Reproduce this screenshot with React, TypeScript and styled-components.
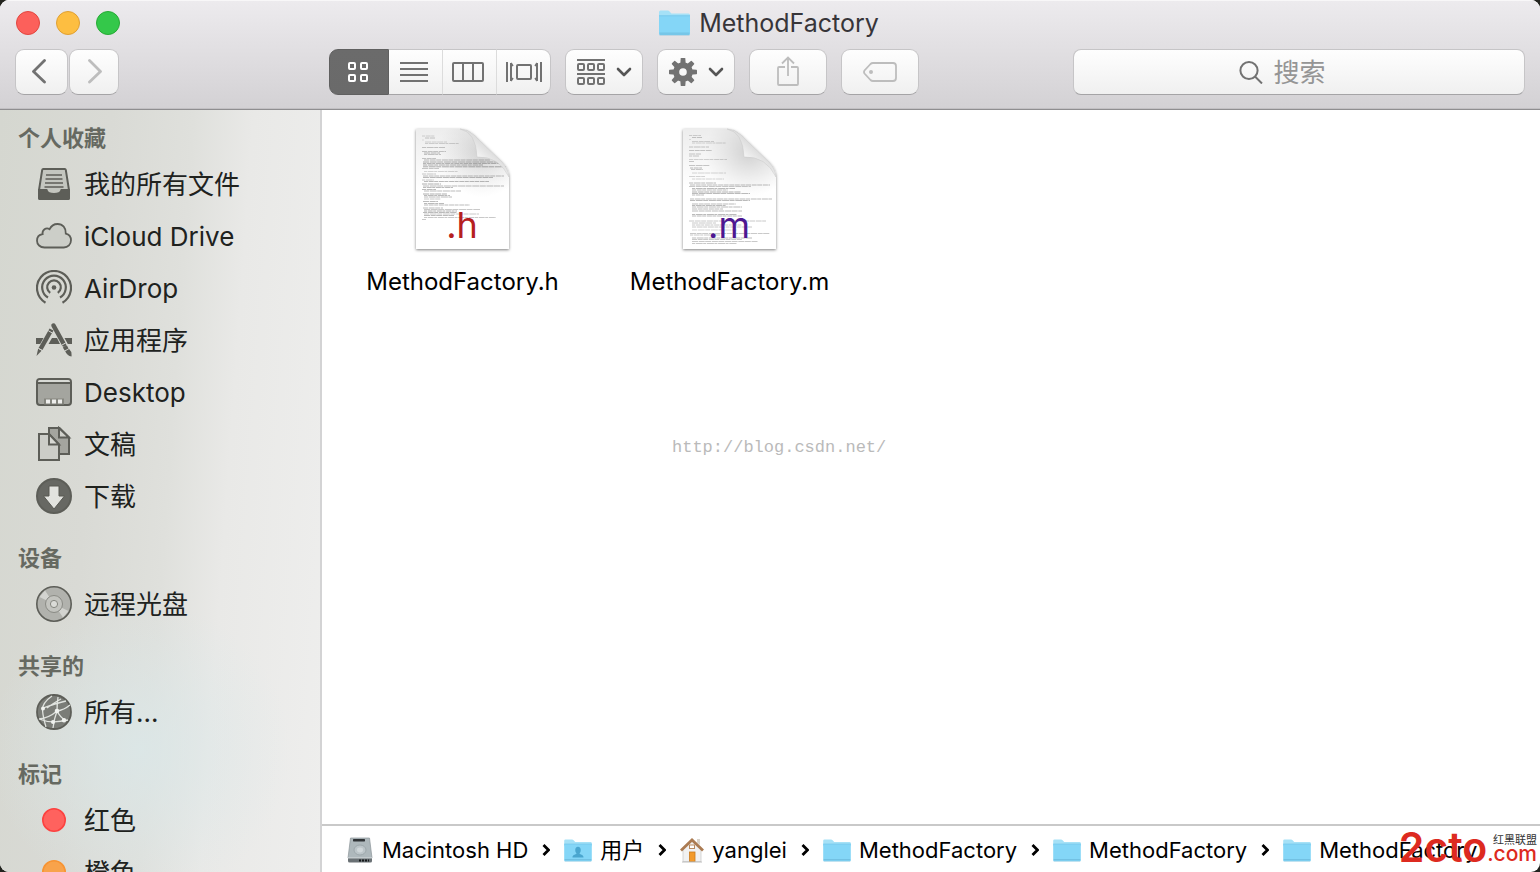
import React from "react";
import styled, { createGlobalStyle } from "styled-components";

const GlobalStyle = createGlobalStyle`
  * { box-sizing: border-box; }
  body { margin: 0; background: #23241f; overflow: hidden; }
  button, input { font: inherit; color: inherit; margin: 0; }
  a { color: inherit; text-decoration: none; }
  ul, ol { list-style: none; margin: 0; padding: 0; }
  svg { display: block; flex: none; }
`;

const Window = styled.div`
  position: relative;
  display: flex;
  flex-direction: column;
  height: 100vh;
  overflow: hidden;
  border-radius: 9px;
  background: #fff;
  font-family: Inter, "Noto Sans CJK SC", sans-serif;
`;

/* ---------- title bar and toolbar ---------- */

const Header = styled.header`
  flex: none;
  padding: 0 15px 14px;
  background: linear-gradient(#edebee, #d3d1d4);
  border-bottom: 1px solid #8f8e90;
  box-shadow: inset 0 1px 0 #f8f7f8, inset 0 -1px 0 #c2c0c3;
`;

const TitleRow = styled.div`
  display: grid;
  grid-template-columns: 1fr auto 1fr;
  align-items: center;
  height: 45px;
  margin-bottom: 4px;
`;

const Lights = styled.div`
  display: flex;
  gap: 16px;
  padding-left: 1px;
`;

const Light = styled.button<{ $fill: string; $edge: string }>`
  width: 24px;
  height: 24px;
  padding: 0;
  border: 1px solid ${(p) => p.$edge};
  border-radius: 50%;
  background: ${(p) => p.$fill};
`;

const Title = styled.h1`
  display: flex;
  align-items: center;
  gap: 9px;
  margin: 0;
  padding-right: 2px;
  font-size: 25px;
  line-height: 32px;
  font-weight: 400;
  color: #373539;
`;

const Tools = styled.div`
  display: flex;
  align-items: center;
  gap: 14px;
`;

const NavGroup = styled.div`
  display: flex;
  gap: 1px;
  width: 300px;
`;

const ToolButton = styled.button<{ $width?: number }>`
  display: flex;
  align-items: center;
  justify-content: center;
  gap: 11px;
  width: ${(p) => p.$width ?? 78}px;
  height: 46px;
  padding: 0;
  border: 1px solid #c6c5c7;
  border-bottom-color: #a5a4a6;
  border-radius: 9px;
  background: linear-gradient(#fefefe, #f0f0f0);
  color: #727272;
  &:disabled { color: #bdbdbd; }
`;

const BackButton = styled(ToolButton)`
  padding-right: 5px;
`;

const Segments = styled.div`
  display: flex;
`;

const Segment = styled(ToolButton)`
  padding-right: 3px;
  border-radius: 0;
  border-left-width: 0;
  border-right-color: #dcdcdc;
  &:first-child { border-radius: 9px 0 0 9px; border-left-width: 1px; }
  &:last-child { border-radius: 0 9px 9px 0; border-right-color: #c6c5c7; padding-right: 0; }
  &[aria-pressed="true"] {
    background: linear-gradient(#6b6b6b, #6a6a6a);
    border-color: #606060;
    color: #fff;
  }
`;

const SearchField = styled.label`
  display: flex;
  align-items: center;
  justify-content: center;
  gap: 11px;
  flex: 0 1 452px;
  height: 46px;
  margin-left: auto;
  border: 1px solid #c6c5c7;
  border-bottom-color: #a5a4a6;
  border-radius: 8px;
  background: linear-gradient(#fefefe, #f0f0f0);
  color: #727272;
  input {
    width: 86px;
    padding: 2px 0 0;
    border: 0;
    outline: 0;
    background: none;
    font-size: 26px;
    line-height: 38px;
  }
  input::placeholder { color: #959595; opacity: 1; }
`;

/* ---------- body ---------- */

const Body = styled.div`
  display: flex;
  flex: 1;
  min-height: 0;
`;

const Sidebar = styled.nav`
  flex: 0 0 322px;
  overflow: hidden;
  padding-top: 8px;
  border-right: 2px solid #d3d3d4;
  background:
    radial-gradient(circle at 140px 640px, rgba(219, 232, 233, 0.8), rgba(219, 232, 233, 0) 150px),
    linear-gradient(94deg, #d5d7d0 0%, #d9dad5 30%, #dfe0dc 52%, #e9e9e7 68%, #eeeeed 100%);
`;

const Section = styled.section`
  margin-bottom: 16px;
`;

const SectionTitle = styled.h2`
  margin: 0;
  padding-left: 18px;
  font-size: 22px;
  line-height: 40px;
  font-weight: 600;
  color: #666961;
`;

const Place = styled.a`
  display: flex;
  align-items: center;
  gap: 12px;
  height: 52px;
  padding-left: 36px;
  font-size: 26px;
  line-height: 38px;
  color: #20221e;
  svg { color: #5d5e58; }
  span { padding-top: 2px; }
`;

const Content = styled.main`
  display: flex;
  flex-direction: column;
  flex: 1;
  min-width: 0;
`;

const Files = styled.ul`
  display: flex;
  flex-wrap: wrap;
  align-content: flex-start;
  flex: 1;
  padding: 14px 7px;
`;

const FileItem = styled.li`
  width: 267px;
`;

const FileLink = styled.a`
  display: flex;
  flex-direction: column;
  align-items: center;
  gap: 10px;
  font-size: 24px;
  line-height: 32px;
  color: #000;
`;

const PathBar = styled.ol`
  display: flex;
  align-items: center;
  flex: none;
  gap: 14px;
  height: 48px;
  padding: 2px 0 0 24px;
  overflow: hidden;
  border-top: 2px solid #c9c9c9;
  font-size: 22px;
  line-height: 30px;
  white-space: nowrap;
  color: #000;
`;

const Crumb = styled.li`
  display: flex;
  align-items: center;
  gap: 14px;
  a { display: flex; align-items: center; gap: 8px; }
`;

const BlogMark = styled.p`
  position: absolute;
  top: 437px;
  left: 672px;
  margin: 0;
  font: 17px/22px "Liberation Mono", monospace;
  color: #bababa;
`;

const SiteMark = styled.div`
  position: absolute;
  right: 3px;
  bottom: 4px;
  display: flex;
  align-items: flex-end;
  color: #dd2a20;
`;

const SiteName = styled.span`
  font-size: 41px;
  line-height: 42px;
  font-weight: 600;
`;

const SiteSide = styled.span`
  display: flex;
  flex-direction: column;
  align-items: flex-end;
  padding-bottom: 6px;
  font-size: 21px;
  line-height: 16px;
  font-weight: 500;
  small {
    font-size: 11px;
    line-height: 12px;
    font-weight: 400;
    color: #333;
  }
`;

/* ---------- drawings ---------- */

const Chevron = ({ dir }: { dir: "left" | "right" }) => (
  <svg width="16" height="26" viewBox="0 0 16 26" fill="none" stroke="currentColor" strokeWidth="2.8" strokeLinecap="round" strokeLinejoin="round">
    <path d={dir === "left" ? "M13.500 1.500 2.500 12.500l11 10.500" : "M3.500 1.500l11 11-11 10.500"} />
  </svg>
);

const DownChevron = () => (
  <svg width="16" height="10" viewBox="0 0 16 10" fill="none" stroke="#555" strokeWidth="2.6" strokeLinecap="round" strokeLinejoin="round">
    <path d="M2 2l6 6 6-6" />
  </svg>
);

const CrumbArrow = () => (
  <svg width="8" height="12" viewBox="0 0 8 12" fill="none" stroke="#000" strokeWidth="2.800">
    <path d="M1.500 1l5 5-5 5" />
  </svg>
);

const GridIcon = () => (
  <svg width="22" height="22" viewBox="0 0 22 22" fill="none" stroke="currentColor" strokeWidth="2">
    {[[2, 2], [14, 2], [2, 14], [14, 14]].map(([x, y]) => (
      <rect key={`${x}-${y}`} x={x} y={y} width="6" height="6" rx="1" />
    ))}
  </svg>
);

const ListIcon = () => (
  <svg width="28" height="20" viewBox="0 0 28 20" fill="currentColor">
    {[0, 6, 12, 18].map((y) => <rect key={y} y={y} width="28" height="2" />)}
  </svg>
);

const ColumnsIcon = () => (
  <svg width="32" height="20" viewBox="0 0 32 20" fill="none" stroke="currentColor" strokeWidth="2">
    <rect x="1" y="1" width="30" height="18" rx="1" />
    <path d="M11 1v18M21 1v18" />
  </svg>
);

const CoverFlowIcon = () => (
  <svg width="36" height="20" viewBox="0 0 36 20" fill="none" stroke="currentColor" strokeWidth="2">
    <path d="M1 0v20M35 0v20" />
    <path d="M5 1v18M31 1v18" />
    <path d="M5 1l2 3M5 19l2-3M31 1l-2 3M31 19l-2-3" strokeWidth="1.5" />
    <rect x="11" y="3" width="14" height="14" rx="1" />
  </svg>
);

const ArrangeIcon = () => (
  <svg width="28" height="26" viewBox="0 0 28 26" fill="none" stroke="currentColor" strokeWidth="2">
    <path d="M0 1h28M0 15h28" />
    {[1, 11, 21].map((x) => (
      <React.Fragment key={x}>
        <rect x={x} y="5" width="6" height="6" rx="1" />
        <rect x={x} y="19" width="6" height="6" rx="1" />
      </React.Fragment>
    ))}
  </svg>
);

const GearIcon = () => (
  <svg width="28" height="28" viewBox="0 0 28 28">
    <g fill="currentColor">
      {[0, 45, 90, 135, 180, 225, 270, 315].map((a) => (
        <path key={a} d="M11.200 7 11.700.600Q11.800 0 12.400 0h3.200q.6 0 .7.600L16.800 7z" transform={`rotate(${a} 14 14)`} />
      ))}
    </g>
    <circle cx="14" cy="14" r="6.800" fill="none" stroke="currentColor" strokeWidth="6" />
  </svg>
);

const ShareIcon = () => (
  <svg width="22" height="32" viewBox="0 0 22 32" fill="none" stroke="currentColor" strokeWidth="1.800">
    <path d="M8 11H2q-1 0-1 1v16q0 1 1 1h18q1 0 1-1V12q0-1-1-1h-6M11 20V2M5 7.500 11 1.500l6 6" />
  </svg>
);

const TagIcon = () => (
  <svg width="34" height="20" viewBox="0 0 34 20" fill="none" stroke="currentColor" strokeWidth="1.800">
    <path d="M10 1h20q3 0 3 3v12q0 3-3 3H10q-1.500 0-2.500-1L1.500 11.500q-1-1.500 0-3L7.500 2q1-1 2.500-1z" />
    <circle cx="8" cy="10" r="2" fill="currentColor" stroke="none" />
  </svg>
);

const SearchIcon = () => (
  <svg width="24" height="24" viewBox="0 0 24 24" fill="none" stroke="currentColor" strokeWidth="2">
    <circle cx="10" cy="10.500" r="8.600" />
    <path d="M16 16.500l7 7" />
  </svg>
);

const FolderIcon = ({ width, person }: { width: number; person?: boolean }) => (
  <svg width={width} height={Math.round((width * 5) / 6)} viewBox="0 0 30 25">
    <path d="M0 2Q0 .5 1.500.5h7q1 0 1.700.8L12 3.200h16.500q1.500 0 1.500 1.500V8H0z" fill="#a5e1f7" />
    <path d="M0 5.500h30V23q0 1-1 1H1q-1 0-1-1z" fill="#84d6f7" />
    <path d="M0 5.500h30" stroke="#72c6ea" strokeWidth=".8" />
    <path d="M.5 22.300h29M.5 24h29" stroke="#6cb9dc" strokeWidth=".8" />
    {person && (
      <path d="M15 8.500c2 0 3 1.500 3 3.500s-.7 3-1.400 3.600c.2 1.600 4.400 1.200 4.400 4.400H9c0-3.200 4.200-2.800 4.400-4.400C12.700 15 12 14 12 12s1-3.500 3-3.500z" fill="#4aa6cf" />
    )}
  </svg>
);

const DriveIcon = () => (
  <svg width="28" height="28" viewBox="0 0 28 28">
    <path d="M4.500 2h19L26 22H2z" fill="#aeb8bc" stroke="#8b9498" strokeWidth=".7" />
    <path d="M2 22h24v3q0 1.500-1.500 1.500h-21Q2 26.500 2 25z" fill="#6a7175" />
    <path d="M2 21h24v1.500H2z" fill="#c3cacd" />
    <rect x="7" y="3" width="12" height="2.400" rx=".6" fill="#2f3336" />
    <ellipse cx="14" cy="14" rx="6" ry="5" fill="#bcc5c9" stroke="#98a2a6" strokeWidth=".8" />
    <ellipse cx="14" cy="14" rx="3" ry="2.400" fill="#d0d7da" />
    <path d="M13 24.500h10" stroke="#15181a" strokeWidth="1.800" strokeDasharray="2 1" />
  </svg>
);

const HouseIcon = () => (
  <svg width="24" height="26" viewBox="0 0 24 26">
    <path d="M3 11 12 3l9 8v13.500H3z" fill="#f1f1f1" stroke="#c6c6c6" strokeWidth=".7" />
    <path d="M17 2h3v6l-3-2.500z" fill="#d9d3ca" />
    <path d="M1 13.500 12 3l11 10.500" fill="none" stroke="#ab7b52" strokeWidth="2.800" />
    <rect x="9.500" y="8" width="5" height="3.500" fill="#fff" stroke="#b98a60" />
    <rect x="9.500" y="15" width="5.500" height="9.500" fill="#f39a2b" stroke="#c97a1e" strokeWidth=".8" />
    <path d="M2 25h20" stroke="#bdbdbd" />
  </svg>
);

const PlaceSvg = ({ children }: { children: React.ReactNode }) => (
  <svg width="36" height="36" viewBox="0 0 36 36" fill="none" stroke="currentColor" strokeWidth="2">
    {children}
  </svg>
);

const TrayIcon = () => (
  <PlaceSvg>
    <path d="M7.200 3h21.600q.8 0 1 .9L33 24v8q0 1-1 1H4q-1 0-1-1v-8L6.200 3.900q.2-.9 1-.9z" fill="#c4c6bf" />
    <path d="M3 24h7.500q1 4 7.500 4t7.500-4H33v8q0 1-1 1H4q-1 0-1-1z" fill="currentColor" />
    <path d="M10 9h16M9.500 13h17M9 17h18M8.500 21h19" strokeWidth="1.600" />
  </PlaceSvg>
);

const CloudIcon = () => (
  <PlaceSvg>
    <path d="M8.500 29.500C4 29.500 1 26.500 1 22.700c0-3.500 2.400-6 5.600-6.500-.7-4.200 3.400-7.200 7-5 1.500-3.300 4.600-5.200 8-5.200 5 0 8.600 4 8.200 9.600 3 .7 5.200 3.300 5.200 6.700 0 4-3 7.200-7.200 7.200z" fill="#cccec8" strokeWidth="1.800" />
  </PlaceSvg>
);

const AirDropIcon = () => (
  <PlaceSvg>
    <path d="M9.500 32.700a17 17 0 1 1 17 0" strokeWidth="2.200" />
    <path d="M12 27.500a11.800 11.800 0 1 1 12 0" strokeWidth="2.200" />
    <path d="M14.200 22.800a6.800 6.800 0 1 1 7.600 0" strokeWidth="2.200" />
    <circle cx="18" cy="17.500" r="2.300" fill="currentColor" stroke="none" />
  </PlaceSvg>
);

const AppsIcon = () => (
  <PlaceSvg>
    <path d="M0 16h7.500l-3.300 6H0zM16 16h5l3 6H12.500zM28.500 16H36v6h-4.200z" fill="currentColor" stroke="none" />
    <path d="M15.500 7.500 4.500 27" strokeWidth="4.500" />
    <path d="M2.200 26.500l3.600 2.100L.5 34z" fill="currentColor" stroke="none" />
    <path d="M17.500 3.500 28 22.500" strokeWidth="4.500" strokeLinecap="round" />
    <path d="M28.800 24.300l1.800 3.200" strokeWidth="4.500" />
    <path d="M29.200 29.200l3.900-2.200q3 2.500 2.400 7.500-4.500-.8-6.300-5.300z" fill="currentColor" stroke="none" />
    <path d="M12.300 8.700l4.200 2.400M26 23l5-2.800M2.500 26.500l5 2.800" stroke="#d8d9d4" strokeWidth="1" />
  </PlaceSvg>
);

const DesktopIcon = () => (
  <PlaceSvg>
    <rect x="1" y="5" width="34" height="26" rx="3" fill="#a4a59f" />
    <path d="M2 8.500V8q0-2 2-2h28q2 0 2 2v.5z" fill="#d8dad5" stroke="none" />
    <path d="M1 9h34" />
    <rect x="8" y="24.500" width="20" height="6" fill="#85867f" stroke="none" />
    <path d="M10 27.500h4M16 27.500h4M22 27.500h4" stroke="#eeeeec" strokeWidth="4" />
  </PlaceSvg>
);

const DocumentsIcon = () => (
  <PlaceSvg>
    <path d="M13 2h10.500L33 11.500V28H13z" fill="#a4a59f" />
    <path d="M23 2v9.500h10z" fill="#d0d1cb" />
    <path d="M3 8h10l10 10.500V34H3z" fill="#cccdc8" />
    <path d="M13 8v10.500h10z" fill="#d8d9d4" />
  </PlaceSvg>
);

const DownloadIcon = () => (
  <PlaceSvg>
    <circle cx="18" cy="18" r="17" fill="#676863" />
    <path d="M13 8h10v10h5.500L18 31 7.500 18H13z" fill="#e2e3df" stroke="#585953" strokeWidth="1" />
  </PlaceSvg>
);

const DiscIcon = () => (
  <PlaceSvg>
    <circle cx="18" cy="18" r="17.200" fill="#b1b2ad" strokeWidth="1.600" />
    <path d="M18 18 3.500 11 9 4.500zM18 18l14.500 7L27 31.500z" fill="#d3d4d0" stroke="none" />
    <circle cx="18" cy="18" r="8.500" fill="#c3c4bf" stroke="#8a8b85" strokeWidth="1" />
    <circle cx="18" cy="18" r="3.600" fill="#dadbd7" stroke="#85867f" strokeWidth="1" />
  </PlaceSvg>
);

const NetworkIcon = () => (
  <PlaceSvg>
    <circle cx="18" cy="18" r="17" fill="#7a7c77" strokeWidth="1.800" />
    <g stroke="#e0e3df" strokeWidth="1.300">
      <path d="M16 2Q6 9 6.500 16T10 33M22 3q-1 8-1 14 3 6 8 9M30 7q-9 2-23 7M21 17q7-1 13-6M21 17Q13 24 3 25M17 34q1-9 4-17M3 25q12 5 29 1M25 5q-9 5-14 9" />
    </g>
    <g fill="#f0f2ef" stroke="none">
      <circle cx="7" cy="14.500" r="2" />
      <circle cx="21" cy="17" r="2.300" />
      <circle cx="17" cy="28" r="2" />
      <circle cx="28" cy="26.300" r="2.200" />
    </g>
  </PlaceSvg>
);

const TagDot = ({ fill, edge }: { fill: string; edge: string }) => (
  <PlaceSvg>
    <circle cx="18" cy="18" r="11.200" fill={fill} stroke={edge} strokeWidth="1.600" />
  </PlaceSvg>
);

type Line = [x: number, y: number, width: number, strength: number];

const headerLines: Line[] = [
  [6, 7, 13, 3], [9, 9, 10, 4], [6, 11, 2, 2], [9, 13, 22, 3], [9, 14.5, 34, 3],
  [6, 18.5, 23, 4], [6, 22.5, 24, 4], [8, 24, 16, 5], [8, 25.5, 17, 4],
  [6, 29.5, 14, 4], [8, 31, 66, 5], [7, 33, 77, 6], [7, 34.5, 80, 5], [7, 36, 60, 6], [7, 37.8, 83, 6], [6, 39.5, 17, 4],
  [8, 42.5, 34, 3], [6, 45, 14, 4], [7, 47, 81, 5], [7, 48.5, 70, 5], [6, 51, 12, 4], [8, 52.5, 65, 5],
  [6, 55, 19, 6], [7, 57, 81, 5], [7, 58.5, 30, 5], [6, 60.5, 14, 5], [8, 62, 37, 5],
  [7, 65, 24, 6], [8, 66.5, 26, 5], [8, 68, 28, 5], [8, 70, 17, 4], [7, 72.5, 15, 5], [8, 74.5, 20, 5], [8, 76, 46, 5],
  [7, 79, 20, 5], [8, 80.5, 56, 4], [8, 82, 33, 6], [7, 83.5, 34, 5], [8, 85, 55, 4], [8, 86.5, 30, 5], [8, 88.5, 72, 4], [6, 90.5, 4, 4],
];

const sourceLines: Line[] = [
  [6, 6.5, 12, 3], [9, 8.5, 10, 4], [6, 10.5, 2, 2], [9, 12.5, 22, 3], [9, 14, 34, 3],
  [6, 18, 20, 4], [6, 21.5, 23, 4], [6, 25, 12, 4], [6, 27, 10, 4], [6, 30.5, 38, 3], [6, 32.5, 5, 4],
  [6, 36.5, 21, 4], [7, 39, 12, 5], [8, 40.5, 12, 4], [9, 44, 34, 3], [6, 47.5, 16, 3], [9, 50, 32, 3],
  [6, 54, 27, 5], [7, 56, 80, 5], [6, 57.5, 62, 4], [9, 59.5, 43, 5], [9, 61, 36, 5], [9, 63, 49, 6], [9, 64.5, 58, 5], [9, 66, 12, 5],
  [7, 70, 82, 5], [7, 71.5, 60, 5], [9, 75, 44, 5], [9, 76.5, 34, 5], [9, 78, 50, 5], [9, 80, 31, 5], [9, 82, 50, 5],
  [9, 85.5, 45, 5], [9, 87, 50, 5], [6, 92, 77, 4], [9, 94, 24, 4], [9, 96, 50, 4], [9, 98, 60, 4],
  [9, 101, 45, 3], [7, 104.5, 80, 4], [7, 106, 30, 4], [9, 109, 60, 5], [9, 110.5, 50, 4], [9, 112.5, 66, 4], [9, 114.5, 45, 4],
];

const CodeDocument = ({ lines, suffix, color, id }: { lines: Line[]; suffix: string; color: string; id: string }) => (
  <svg width="105" height="132" viewBox="-6 -5 105 132">
    <defs>
      <linearGradient id={`${id}-page`} x1="0" y1="0" x2="0" y2="1">
        <stop offset="0" stopColor="#ededed" />
        <stop offset=".5" stopColor="#fff" />
      </linearGradient>
      <linearGradient id={`${id}-curl`} x1=".1" y1=".9" x2=".55" y2=".4">
        <stop offset="0" stopColor="#fff" />
        <stop offset=".5" stopColor="#fbfbfb" />
        <stop offset="1" stopColor="#dedede" />
      </linearGradient>
      <radialGradient id={`${id}-shade`} gradientUnits="userSpaceOnUse" cx="66" cy="24" r="44">
        <stop offset="0" stopColor="#888" stopOpacity=".55" />
        <stop offset="1" stopColor="#aaa" stopOpacity="0" />
      </radialGradient>
      <filter id={`${id}-shadow`} x="-10%" y="-10%" width="120%" height="120%">
        <feDropShadow dx="0" dy="1" stdDeviation="1.5" floodColor="#000" floodOpacity=".5" />
      </filter>
    </defs>
    <path d="M0 0h44q8 0 14 6l28 27q7 7 7 15v72H0z" fill={`url(#${id}-page)`} filter={`url(#${id}-shadow)`} />
    <path d="M0 0h44q8 0 14 6l28 27q7 7 7 15v40H0z" fill={`url(#${id}-shade)`} opacity=".6" />
    <g stroke="#555">
      {lines.map(([x, y, w, s], i) => (
        <path key={i} d={`M${x} ${y}h${w}`} strokeWidth=".8" opacity={s / 10} strokeDasharray={`${3 + (i % 4)} .7 ${5 + (i % 3)} .5`} />
      ))}
    </g>
    <path d="M44 0q16 3 17 28 22-1 32 20-1-9-7-15L58 6Q52 0 44 0z" fill={`url(#${id}-curl)`} stroke="#cdcdcd" strokeWidth=".6" />
    <text x="46" y="109" textAnchor="middle" fontFamily="Inter, sans-serif" fontSize="36" fill={color}>{suffix}</text>
  </svg>
);

/* ---------- data ---------- */

const sections = [
  {
    title: "个人收藏",
    places: [
      { name: "我的所有文件", icon: <TrayIcon /> },
      { name: "iCloud Drive", icon: <CloudIcon /> },
      { name: "AirDrop", icon: <AirDropIcon /> },
      { name: "应用程序", icon: <AppsIcon /> },
      { name: "Desktop", icon: <DesktopIcon /> },
      { name: "文稿", icon: <DocumentsIcon /> },
      { name: "下载", icon: <DownloadIcon /> },
    ],
  },
  { title: "设备", places: [{ name: "远程光盘", icon: <DiscIcon /> }] },
  { title: "共享的", places: [{ name: "所有...", icon: <NetworkIcon /> }] },
  {
    title: "标记",
    places: [
      { name: "红色", icon: <TagDot fill="#ff625e" edge="#fc4240" /> },
      { name: "橙色", icon: <TagDot fill="#f8a34b" edge="#f79433" /> },
    ],
  },
];

const crumbs = [
  { name: "Macintosh HD", icon: <DriveIcon /> },
  { name: "用户", icon: <FolderIcon width={28} person /> },
  { name: "yanglei", icon: <HouseIcon /> },
  { name: "MethodFactory", icon: <FolderIcon width={28} /> },
  { name: "MethodFactory", icon: <FolderIcon width={28} /> },
  { name: "MethodFactory", icon: <FolderIcon width={28} /> },
];

export default function App() {
  return (
    <>
      <GlobalStyle />
      <Window>
        <Header>
          <TitleRow>
            <Lights>
              <Light aria-label="关闭" $fill="#fc605b" $edge="#e2463f" />
              <Light aria-label="最小化" $fill="#fdbe41" $edge="#e0a033" />
              <Light aria-label="缩放" $fill="#34c84a" $edge="#27aa35" />
            </Lights>
            <Title>
              <FolderIcon width={31} />
              MethodFactory
            </Title>
          </TitleRow>
          <Tools>
            <NavGroup>
              <BackButton $width={53} aria-label="后退"><Chevron dir="left" /></BackButton>
              <ToolButton $width={50} aria-label="前进" disabled><Chevron dir="right" /></ToolButton>
            </NavGroup>
            <Segments role="group" aria-label="显示方式">
              <Segment $width={60} aria-label="图标" aria-pressed="true"><GridIcon /></Segment>
              <Segment $width={54} aria-label="列表" aria-pressed="false"><ListIcon /></Segment>
              <Segment $width={54} aria-label="分栏" aria-pressed="false"><ColumnsIcon /></Segment>
              <Segment $width={54} aria-label="Cover Flow" aria-pressed="false"><CoverFlowIcon /></Segment>
            </Segments>
            <ToolButton aria-label="排列"><ArrangeIcon /><DownChevron /></ToolButton>
            <ToolButton aria-label="操作"><GearIcon /><DownChevron /></ToolButton>
            <ToolButton aria-label="共享" disabled><ShareIcon /></ToolButton>
            <ToolButton aria-label="标记" disabled><TagIcon /></ToolButton>
            <SearchField>
              <SearchIcon />
              <input type="text" placeholder="搜索" aria-label="搜索" />
            </SearchField>
          </Tools>
        </Header>
        <Body>
          <Sidebar>
            {sections.map((section) => (
              <Section key={section.title}>
                <SectionTitle>{section.title}</SectionTitle>
                <ul>
                  {section.places.map((place) => (
                    <li key={place.name}>
                      <Place href="#">{place.icon}<span>{place.name}</span></Place>
                    </li>
                  ))}
                </ul>
              </Section>
            ))}
          </Sidebar>
          <Content>
            <Files>
              <FileItem>
                <FileLink href="#">
                  <CodeDocument id="header" lines={headerLines} suffix=".h" color="#b5201f" />
                  MethodFactory.h
                </FileLink>
              </FileItem>
              <FileItem>
                <FileLink href="#">
                  <CodeDocument id="source" lines={sourceLines} suffix=".m" color="#4d1791" />
                  MethodFactory.m
                </FileLink>
              </FileItem>
            </Files>
            <PathBar>
              {crumbs.map((crumb, i) => (
                <Crumb key={i}>
                  <a href="#">{crumb.icon}{crumb.name}</a>
                  {i < crumbs.length - 1 && <CrumbArrow />}
                </Crumb>
              ))}
            </PathBar>
          </Content>
        </Body>
        <BlogMark>http://blog.csdn.net/</BlogMark>
        <SiteMark>
          <SiteName>2cto</SiteName>
          <SiteSide><small>红黑联盟</small>.com</SiteSide>
        </SiteMark>
      </Window>
    </>
  );
}
